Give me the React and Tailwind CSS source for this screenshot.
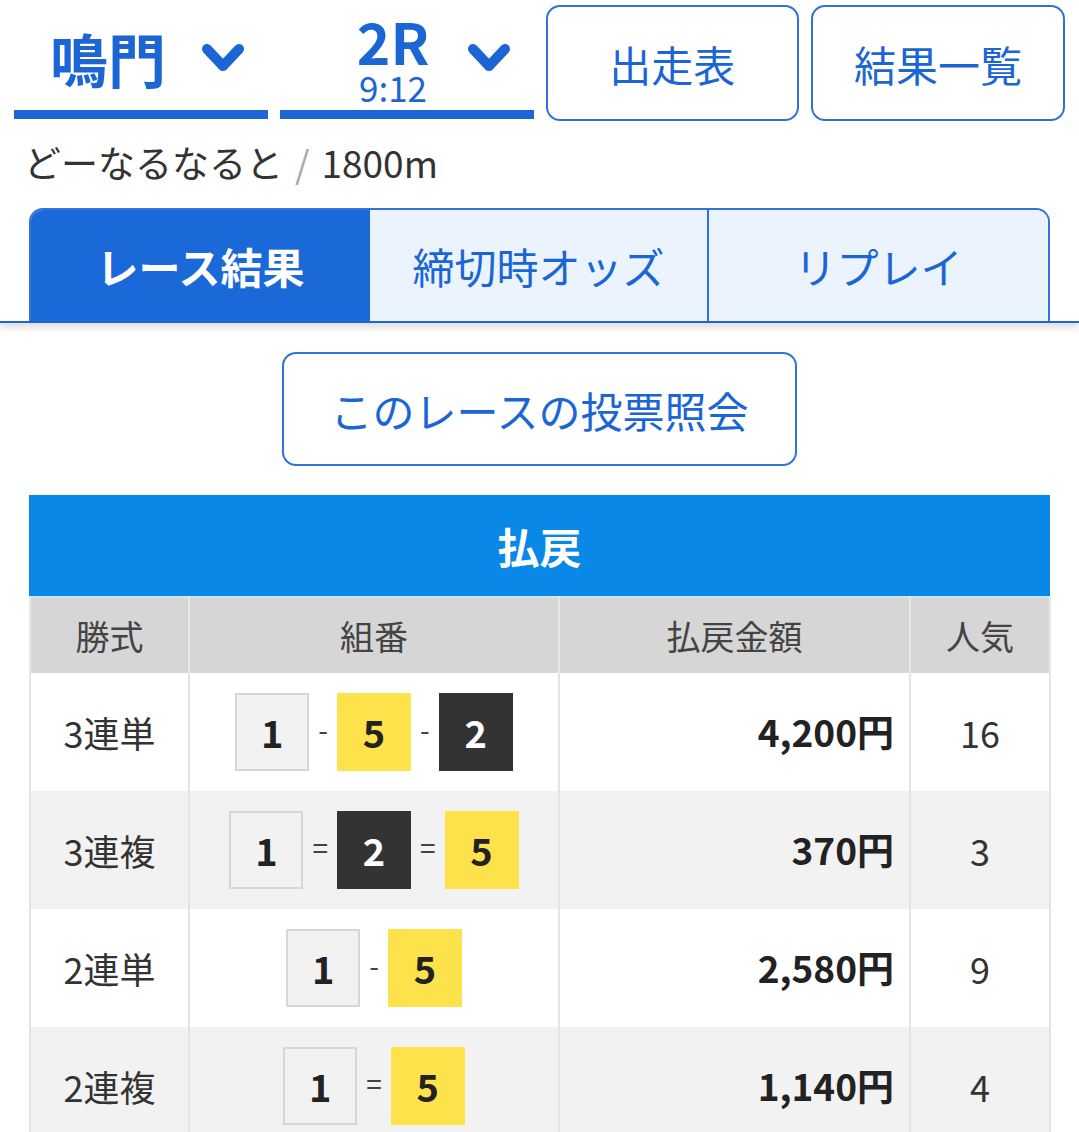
import React from 'react';

const font = { fontFamily: '"Noto Sans CJK JP", "Noto Sans", sans-serif' };

const Chevron = () => (
  <svg width="44" height="30" viewBox="0 0 44 30" fill="none">
    <path d="M6 6 L22 23 L38 6" stroke="#1b66d4" strokeWidth="10" strokeLinecap="round" strokeLinejoin="round" />
  </svg>
);

// 艇番の色
const boxStyles = {
  1: 'bg-[#f2f2f2] border-2 border-[#d6d6d6] text-[#222]',
  2: 'bg-[#333333] text-white',
  5: 'bg-[#fde24b] text-[#222]',
};

const Boat = ({ n }) => (
  <div className={`w-[74px] h-[78px] flex items-center justify-center text-[38px] font-bold leading-none ${boxStyles[n]}`}>
    {n}
  </div>
);

const Combo = ({ nums, sep }) => (
  <div className="flex items-center justify-center">
    {nums.map((n, i) => (
      <React.Fragment key={i}>
        {i > 0 && <span className="mx-[9px] -mt-[6px] text-[28px] leading-none text-[#444]">{sep}</span>}
        <Boat n={n} />
      </React.Fragment>
    ))}
  </div>
);

const rows = [
  { type: '3連単', nums: [1, 5, 2], sep: '-', amount: '4,200円', pop: '16' },
  { type: '3連複', nums: [1, 2, 5], sep: '=', amount: '370円', pop: '3' },
  { type: '2連単', nums: [1, 5], sep: '-', amount: '2,580円', pop: '9' },
  { type: '2連複', nums: [1, 5], sep: '=', amount: '1,140円', pop: '4' },
];

export default function App() {
  return (
    <div className="min-h-screen bg-white text-[#333] overflow-hidden" style={font}>
      {/* 上部セレクタ */}
      <div className="grid grid-cols-4 gap-x-[12px] px-[14px] pt-[5px]">
        <div className="h-[114px] border-b-[9px] border-[#1b66d4] flex items-center justify-between pl-[36px] pr-[23px]">
          <span className="text-[58px] font-bold leading-none text-[#1b66d4]">鳴門</span>
          <Chevron />
        </div>
        <div className="h-[114px] border-b-[9px] border-[#1b66d4] flex items-center justify-between pl-[77px] pr-[23px]">
          <div className="flex flex-col items-center text-[#1b66d4]">
            <span className="text-[57px] font-bold leading-[58px]">2R</span>
            <span className="text-[35px] leading-[36px]">9:12</span>
          </div>
          <Chevron />
        </div>
        <button className="h-[116px] rounded-[14px] border-2 border-[#2f72d8] text-[42px] text-[#1b66d4]">出走表</button>
        <button className="h-[116px] rounded-[14px] border-2 border-[#2f72d8] text-[42px] text-[#1b66d4]">結果一覧</button>
      </div>

      <p className="mt-[19px] pl-[24px] text-[37px] leading-[44px] text-[#333]">
        どーなるなると<span className="mx-[12px] text-[#aaa]">/</span>1800m
      </p>

      {/* タブ */}
      <div className="mt-[24px] border-b-2 border-[#1b66d4] shadow-[0_5px_6px_rgba(0,0,0,0.12)]">
        <div className="mx-[29px] grid grid-cols-3 h-[113px] rounded-t-[14px] border-2 border-b-0 border-[#2f72d8] overflow-hidden">
          <div className="bg-[#1b68d8] flex items-center justify-center text-[42px] font-bold text-white">レース結果</div>
          <div className="bg-[#ebf4fe] border-r-2 border-[#2f72d8] flex items-center justify-center text-[42px] text-[#1b66d4]">締切時オッズ</div>
          <div className="bg-[#ebf4fe] flex items-center justify-center text-[42px] text-[#1b66d4]">リプレイ</div>
        </div>
      </div>

      <div className="mt-[29px] flex justify-center">
        <button className="w-[515px] h-[114px] rounded-[14px] border-2 border-[#2f72d8] text-[42px] text-[#1b66d4]">
          このレースの投票照会
        </button>
      </div>

      {/* 払戻テーブル */}
      <div className="mt-[29px] mx-[29px]">
        <div className="h-[101px] bg-[#0a88e8] flex items-center justify-center text-[42px] font-bold text-white">払戻</div>
        <table className="w-full table-fixed border-collapse">
          <colgroup>
            <col className="w-[159px]" />
            <col className="w-[370px]" />
            <col className="w-[351px]" />
            <col className="w-[140px]" />
          </colgroup>
          <thead>
            <tr className="h-[76px] bg-[#d6d6d6] text-[34px] text-[#444] border-t-2 border-[#cfe6f8]">
              <th className="font-normal border-x-2 border-[#e8e8e8]">勝式</th>
              <th className="font-normal border-x-2 border-[#e8e8e8]">組番</th>
              <th className="font-normal border-x-2 border-[#e8e8e8]">払戻金額</th>
              <th className="font-normal border-x-2 border-[#e8e8e8]">人気</th>
            </tr>
          </thead>
          <tbody>
            {rows.map((r, i) => (
              <tr key={r.type} className={`h-[118px] ${i % 2 ? 'bg-[#f2f2f2]' : 'bg-white'}`}>
                <td className="border-x-2 border-[#e4e4e4] text-center text-[36px] text-[#333]">{r.type}</td>
                <td className="border-x-2 border-[#e4e4e4]">
                  <Combo nums={r.nums} sep={r.sep} />
                </td>
                <td className="border-x-2 border-[#e4e4e4] text-right pr-[15px] text-[37px] font-bold text-[#222]">{r.amount}</td>
                <td className="border-x-2 border-[#e4e4e4] text-center text-[36px] text-[#333]">{r.pop}</td>
              </tr>
            ))}
          </tbody>
        </table>
      </div>
    </div>
  );
}
